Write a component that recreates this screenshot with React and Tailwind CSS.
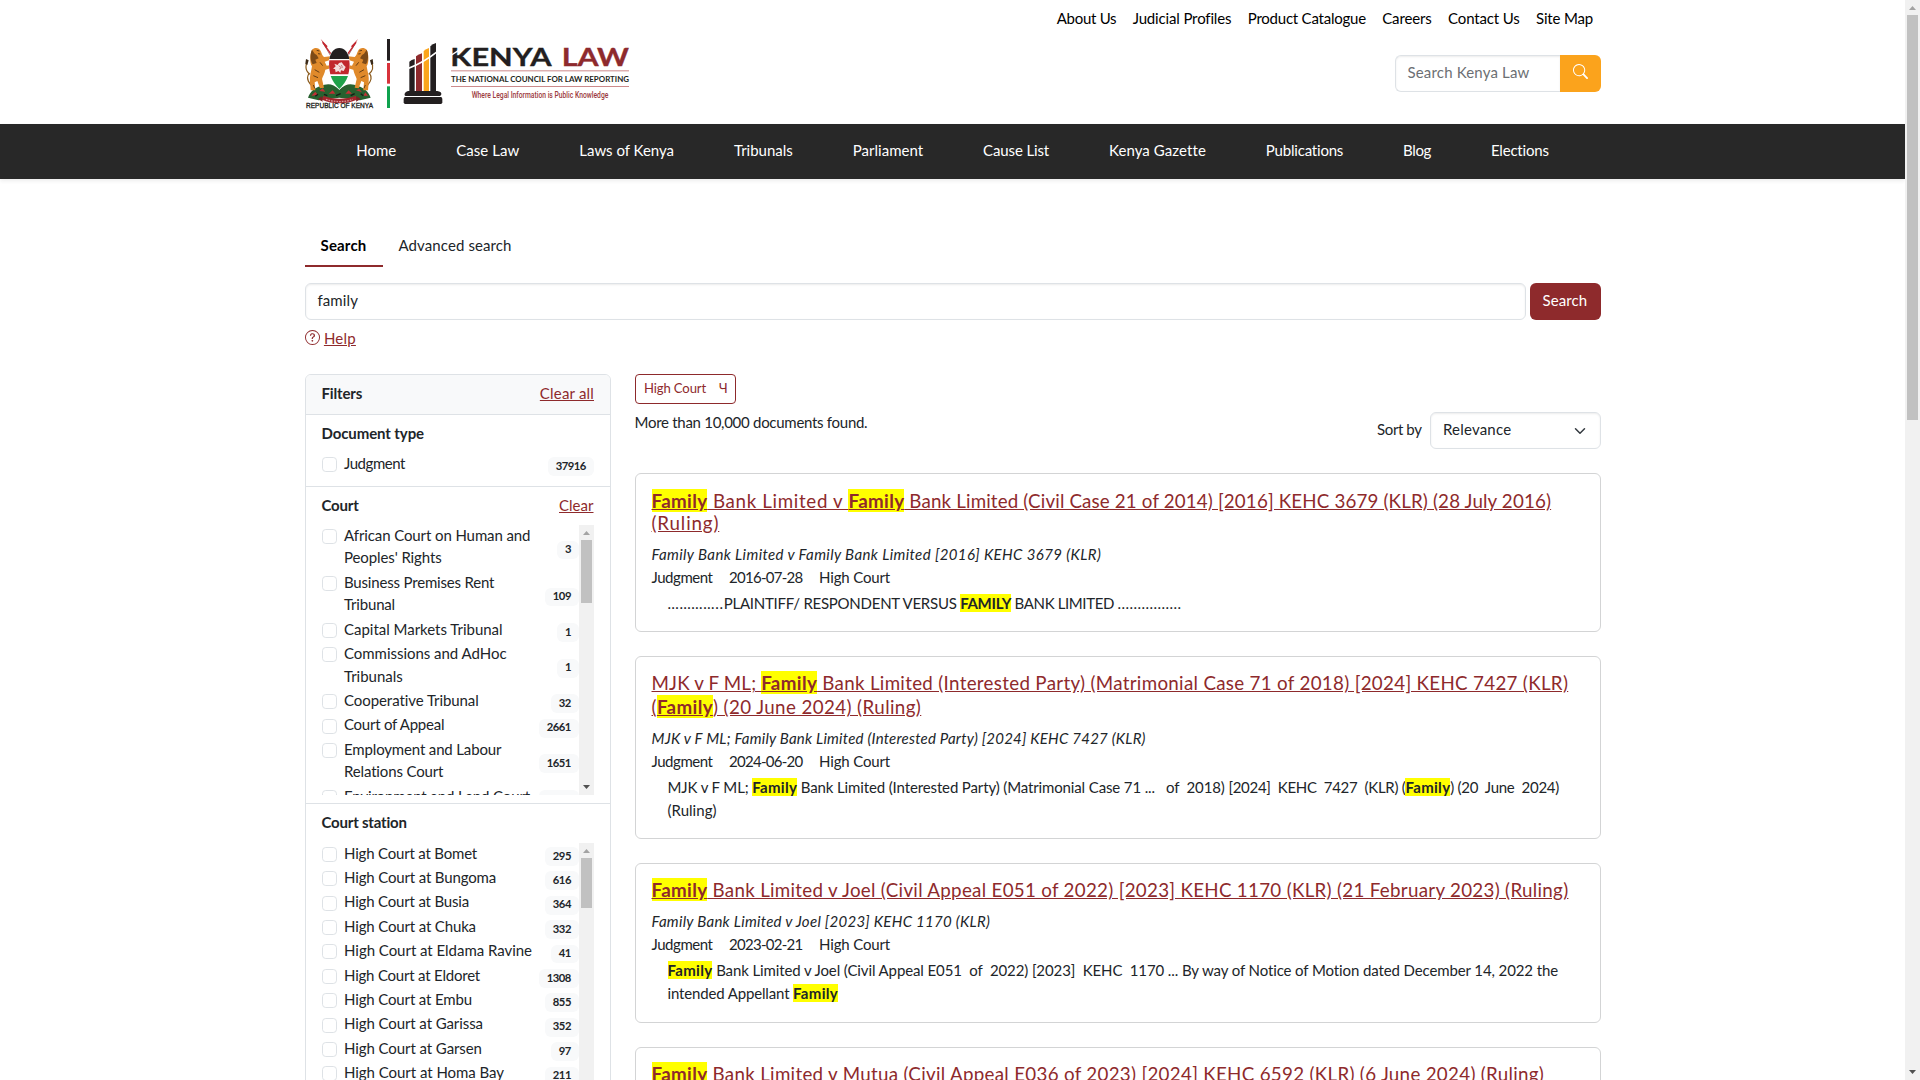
const TOP_LINKS = [
  ["About Us", "tracking-[-0.28px]"],
  ["Judicial Profiles", "tracking-[-0.15px]"],
  ["Product Catalogue", "tracking-[-0.23px]"],
  ["Careers", "tracking-[-0.13px]"],
  ["Contact Us", "tracking-[-0.15px]"],
  ["Site Map", "tracking-[-0.17px]"],
];

const NAV = [
  ["Home", "tracking-normal"],
  ["Case Law", "tracking-[0.08px]"],
  ["Laws of Kenya", "tracking-[-0.01px]"],
  ["Tribunals", "tracking-normal"],
  ["Parliament", "tracking-[0.03px]"],
  ["Cause List", "tracking-[-0.13px]"],
  ["Kenya Gazette", "tracking-[0.09px]"],
  ["Publications", "tracking-[-0.2px]"],
  ["Blog", "tracking-[-0.34px]"],
  ["Elections", "tracking-[-0.2px]"],
];

const COURTS = [
  ["African Court on Human and Peoples' Rights", "3", "tracking-[-0.1px]"],
  ["Business Premises Rent Tribunal", "109", "tracking-[-0.18px]"],
  ["Capital Markets Tribunal", "1", "tracking-[-0.02px]"],
  ["Commissions and AdHoc Tribunals", "1", "tracking-[-0.03px]"],
  ["Cooperative Tribunal", "32", "tracking-[-0.07px]"],
  ["Court of Appeal", "2661", "tracking-[-0.25px]"],
  ["Employment and Labour Relations Court", "1651", "tracking-[-0.15px]"],
  ["Environment and Land Court", "3512", "tracking-[-0.12px]"],
];

const STATIONS = [
  ["High Court at Bomet", "295", "tracking-[-0.19px]"],
  ["High Court at Bungoma", "616", "tracking-[-0.15px]"],
  ["High Court at Busia", "364", "tracking-[-0.18px]"],
  ["High Court at Chuka", "332", "tracking-[-0.15px]"],
  ["High Court at Eldama Ravine", "41", "tracking-[-0.03px]"],
  ["High Court at Eldoret", "1308", "tracking-[-0.21px]"],
  ["High Court at Embu", "855", "tracking-[-0.14px]"],
  ["High Court at Garissa", "352", "tracking-[-0.09px]"],
  ["High Court at Garsen", "97", "tracking-[-0.08px]"],
  ["High Court at Homa Bay", "211", "tracking-[-0.04px]"],
];

function Lion() {
  return (
    <g>
      <path d="M30 118 C16 108 16 92 22 78 M33 150 C24 140 18 128 27 116" fill="none" stroke="#8a5a1c" strokeWidth="3.5" />
      <path d="M18 72 l8 4 -4 14 -6 -4z" fill="#3a2a18" />
      <path d="M36 44 C44 36 58 38 62 48 C66 56 66 62 72 66 L92 64 L92 74 L74 80 L80 92 L93 90 L92 100 L76 104 C74 116 68 124 66 132 L72 158 L60 160 L52 138 L44 142 L46 166 L32 166 L30 142 C28 124 34 108 36 94 C28 82 30 56 36 44z" fill="#e08a2b" />
      <path d="M36 44 C30 56 30 76 38 88 L50 84 L46 74 L56 70 L50 60 L44 56z" fill="#7d4a17" />
      <path d="M50 46 l8 2 M54 56 l7 1 M44 104 l14 8 M40 122 l14 6 M60 82 l8 10 M40 150 l4 10" stroke="#4a2c10" strokeWidth="2.5" fill="none" />
    </g>
  );
}

function Logo() {
  return (
    <svg className="h-[70px] w-[325px] shrink-0" viewBox="15 12 975 210">
      <path d="M68 22 L94 66 M168 22 L142 66" stroke="#a87a7c" strokeWidth="3" />
      <path d="M62 12 L83 34 L78 38z M174 12 L153 34 L158 38z" fill="#c3272f" />
      <path d="M68 22 L92 56 M168 22 L144 56" stroke="#c3272f" strokeWidth="4" />
      <path d="M24 188 C32 168 44 158 62 154 C78 146 96 142 118 164 C140 142 158 146 174 154 C192 158 204 168 212 188 L180 196 L118 188 L56 196z" fill="#27612f" />
      <path d="M34 182 l12 -12 8 10 z M58 168 l10 -8 8 10z M86 176 l12 -10 8 10z M136 176 l10 -10 10 10z M168 166 l10 -4 8 10z M190 182 l6 -10 8 10z" fill="#c22f35" />
      <path d="M46 184 l8 -6 M72 178 l10 4 M108 182 l14 -6 M152 182 l12 -6 M182 176 l8 6" stroke="#171c17" strokeWidth="4" />
      <Lion />
      <g transform="matrix(-1 0 0 1 236 0)">
        <Lion />
      </g>
      <path d="M118 40 C134 40 146 54 149 76 C151 108 140 140 118 164 C96 140 85 108 87 76 C90 54 102 40 118 40z" fill="#fff" />
      <path d="M118 39 C134 39 144 52 148 72 L88 72 C92 52 102 39 118 39z" fill="#231f20" />
      <path d="M88 76 L148 76 C150 92 148 106 145 118 L91 118 C88 106 86 92 88 76z" fill="#c1272d" />
      <path d="M92 123 L144 123 C138 140 130 150 118 162 C106 150 98 140 92 123z" fill="#1fa24a" />
      <path d="M103 86 l10 4 4 -6 8 -2 6 8 6 6 -6 12 -8 -2 -2 8 -6 -6 -8 4 -2 -10 -6 0 8 -8z" fill="#f3dede" />
      <path d="M116 92 l8 6 -6 4 M124 90 l4 8" stroke="#a84a4e" strokeWidth="2" fill="none" />
      <path d="M70 182 C98 194 138 194 168 182 L170 194 C142 208 96 208 66 194z" fill="#a3262c" />
      <path d="M66 184 l-12 8 14 8z M170 184 l12 8 -14 8z" fill="#7e1e23" />
      <path d="M78 193 C102 202 136 202 158 193" fill="none" stroke="#d69a9c" strokeWidth="4" strokeDasharray="5 3" />
      <text x="18" y="218.5" textLength="201" lengthAdjust="spacingAndGlyphs" fontFamily="Liberation Sans" fontSize="19" fill="#231f20" stroke="#231f20" strokeWidth="0.9">REPUBLIC OF KENYA</text>

      <rect x="261" y="12" width="9" height="65" fill="#231f20" />
      <rect x="261" y="84" width="9" height="62" fill="#d8323b" />
      <rect x="261" y="154" width="9" height="65" fill="#0fa24e" />

      <path d="M328 80 Q334 74 344 72 V168 H328z" fill="#231f20" />
      <path d="M348 64 Q356 58 366 55 V168 H348z" fill="#8e2a2d" />
      <path d="M371 48 Q378 42 387 39 V168 H371z" fill="#fba51c" />
      <path d="M391 34 Q398 27 408 24 V168 H391z" fill="#231f20" />
      <path d="M326 100 Q372 82 412 50" fill="none" stroke="#fff" strokeWidth="5" />
      <path d="M324 168 h88 q12 2 12 8 q0 7 -8 7 h-96 q-8 0 -6 -7 q2 -6 10 -8z" fill="#231f20" />
      <path d="M316 186 h106 q5 0 5 6 v10 q0 5 -5 5 h-106 q-5 0 -5 -5 v-10 q0 -6 5 -6z" fill="#231f20" />

      <text x="451" y="92" textLength="304" lengthAdjust="spacingAndGlyphs" fontFamily="Lato" fontWeight="700" fontSize="75" fill="#231f20" stroke="#231f20" strokeWidth="1">KENYA</text>
      <path d="M450 63 L476 46" stroke="#fff" strokeWidth="4" />
      <text x="785" y="92" textLength="202" lengthAdjust="spacingAndGlyphs" fontFamily="Lato" fontWeight="700" fontSize="75" fill="#8e2a2d" stroke="#8e2a2d" strokeWidth="1">LAW</text>
      <rect x="453" y="106" width="534" height="3" fill="#cc8a8b" />
      <text x="453" y="140" textLength="534" lengthAdjust="spacingAndGlyphs" fontFamily="Lato" fontWeight="700" fontSize="24" fill="#231f20">THE NATIONAL COUNCIL FOR LAW REPORTING</text>
      <rect x="453" y="153" width="534" height="3" fill="#cc8a8b" />
      <text x="515" y="189" textLength="410" lengthAdjust="spacingAndGlyphs" fontFamily="Roboto" fontWeight="500" fontSize="25" fill="#9c3a3d">Where Legal Information is Public Knowledge</text>
    </svg>
  );
}

function Mark({ children, title }) {
  return (
    <mark
      className={
        title
          ? "bg-[#ff0] font-bold tracking-[0.35px] text-[#8e2a2c]"
          : "bg-[#ff0] font-bold tracking-[0.3px] text-[#212529]"
      }
    >
      {children}
    </mark>
  );
}

function FilterItem({ label, count, tracking }) {
  return (
    <div className="flex items-center justify-between">
      <label className="mb-[1.9px] flex max-w-[224px] items-start gap-[7.5px]">
        <span className="mt-[3.75px] size-[15px] shrink-0 rounded-[3.75px] border border-[#dee2e6] bg-white" />
        <span className={`-mt-[1.5px] mb-[1.5px] ${tracking}`}>{label}</span>
      </label>
      <span className="mt-[2.4px] rounded-[6px] bg-[#f8f9fa] pt-[2.6px] pr-[7.6px] pb-[5px] pl-[7.4px] text-[11.25px] leading-[11.25px] font-bold tracking-[-0.5px]">
        {count}
      </span>
    </div>
  );
}

function InnerScrollbar({ thumb }) {
  return (
    <div className="flex h-full w-[15px] shrink-0 flex-col items-center justify-between bg-[#f1f1f1]">
      <div className="flex flex-col items-center">
        <svg className="h-[15px] w-[15px]" viewBox="0 0 15 15">
          <path d="M4 10 L7.5 6 L11 10z" fill="#a3a3a3" />
        </svg>
        <div className={`w-[11px] bg-[#c1c1c1] ${thumb}`} />
      </div>
      <svg className="h-[15px] w-[15px]" viewBox="0 0 15 15">
        <path d="M4 5 L7.5 9 L11 5z" fill="#505050" />
      </svg>
    </div>
  );
}

function FilterList({ items, thumb }) {
  return (
    <div className="flex h-[270px] overflow-hidden">
      <div className="min-w-0 grow">
        {items.map(([label, count, tracking]) => (
          <FilterItem key={label} label={label} count={count} tracking={tracking} />
        ))}
      </div>
      <InnerScrollbar thumb={thumb} />
    </div>
  );
}

function Result({ title, cite, citeTracking, date, children }) {
  return (
    <article className="mb-6 rounded-[6px] border border-[#d3d4d5] px-4 pt-[15.6px] pb-[16.2px]">
      <h5 className="mb-[8.5px] text-[18.75px] leading-[22.5px] whitespace-nowrap text-[#8e2a2c]">{title}</h5>
      <div className={`italic ${citeTracking}`}>{cite}</div>
      <div className="flex gap-[16.5px]">
        <span className="tracking-[-0.45px]">Judgment</span>
        <span className="tracking-[-0.72px]">{date}</span>
        <span className="tracking-[-0.15px]">High Court</span>
      </div>
      <div className="mt-1 ml-4 whitespace-nowrap">{children}</div>
    </article>
  );
}

const nb = "\u00a0";

export default function App() {
  return (
    <div className="flex h-[1080px] w-[1920px] overflow-hidden bg-white font-['Lato','Open_Sans',sans-serif] text-[15px] leading-[22.5px] text-[#212529]">
      <div className="min-w-0 grow">
        <header className="mx-auto h-[124px] w-[1296px]">
          <div className="flex h-[37px] justify-end gap-[16.4px] pt-[6.6px] pr-[7.5px] text-black">
            {TOP_LINKS.map(([label, tracking]) => (
              <a key={label} className={tracking}>{label}</a>
            ))}
          </div>
          <div className="flex items-start justify-between pt-[2px]">
            <Logo />
            <div className="mt-4 flex h-[37px] w-[206px]">
              <div className="grow rounded-l-[6px] border border-r-0 border-[#dee2e6] pt-[4.5px] pl-3 tracking-[0.17px] text-[#6c6f73] shadow-[inset_0_1px_2px_rgba(0,0,0,0.075)]">
                Search Kenya Law
              </div>
              <div className="flex w-[41px] justify-center rounded-r-[6px] bg-[#fba31c] pt-[9px]">
                <svg className="size-[15px]" viewBox="0 0 16 16" fill="#fff">
                  <path d="M11.742 10.344a6.5 6.5 0 1 0-1.397 1.398h-.001q.044.06.098.115l3.85 3.85a1 1 0 0 0 1.415-1.414l-3.85-3.85a1 1 0 0 0-.115-.1zM12 6.5a5.5 5.5 0 1 1-11 0 5.5 5.5 0 0 1 11 0" />
                </svg>
              </div>
            </div>
          </div>
        </header>

        <nav className="flex h-[55px] justify-center gap-[59.9px] bg-[#282828] pt-[14.5px] text-white shadow-[0_2px_4px_rgba(0,0,0,0.075)]">
          {NAV.map(([label, tracking]) => (
            <a key={label} className={tracking}>{label}</a>
          ))}
        </nav>

        <main className="mx-auto w-[1296px] pt-[46px]">
          <div className="flex">
            <div className="h-[42px] w-[78px] border-b-2 border-[#8e2a2c] pt-[8.6px] pl-4 font-bold tracking-[0.18px] text-black">Search</div>
            <div className="px-4 pt-[8.6px] tracking-[0.1px]">Advanced search</div>
          </div>

          <div className="mt-4 flex h-[37px] gap-1">
            <div className="grow rounded-[6px] border border-[#dee2e6] pt-[4.5px] pl-3 tracking-[0.1px] shadow-[inset_0_1px_2px_rgba(0,0,0,0.075)]">family</div>
            <div className="w-[71px] rounded-[6px] bg-[#8e2a2c] pt-[5.5px] pl-[13px] tracking-[0.1px] text-white">Search</div>
          </div>

          <div className="mt-[6.5px] mb-[25px] flex gap-[4.4px] text-[#8e2a2c]">
            <svg className="mt-[3px] size-[15px]" viewBox="0 0 16 16" fill="currentColor">
              <path d="M8 15A7 7 0 1 1 8 1a7 7 0 0 1 0 14m0 1A8 8 0 1 0 8 0a8 8 0 0 0 0 16" />
              <path d="M5.255 5.786a.237.237 0 0 0 .241.247h.825c.138 0 .248-.113.266-.25.09-.656.54-1.134 1.342-1.134.686 0 1.314.343 1.314 1.168 0 .635-.374.927-.965 1.371-.673.489-1.206 1.06-1.168 1.987l.003.217a.25.25 0 0 0 .25.246h.811a.25.25 0 0 0 .25-.25v-.105c0-.718.273-.927 1.01-1.486.609-.463 1.244-.977 1.244-2.056 0-1.511-1.276-2.241-2.673-2.241-1.267 0-2.655.59-2.75 2.286m1.557 5.763c0 .533.425.927 1.01.927.609 0 1.028-.394 1.028-.927 0-.552-.42-.94-1.029-.94-.584 0-1.009.388-1.009.94" />
            </svg>
            <a className="tracking-[0.23px] underline">Help</a>
          </div>

          <div className="flex gap-6">
            <aside className="w-[306px] shrink-0 overflow-hidden rounded-t-[6px] border border-[#dee2e6]">
              <div className="flex justify-between border-b border-[#dee2e6] bg-[#f8f9fa] pt-[6.5px] pr-[15.5px] pb-[10px] pl-4">
                <b className="tracking-[-0.15px]">Filters</b>
                <a className="tracking-[0.19px] text-[#8e2a2c] underline">Clear all</a>
              </div>
              <section className="border-b border-[#dee2e6] px-4 pt-2 pb-[9px]">
                <div className="-mt-[1.5px] mb-[9px] font-bold tracking-[-0.1px]">Document type</div>
                <FilterItem label="Judgment" count="37916" tracking="tracking-[-0.45px]" />
              </section>
              <section className="border-b border-[#dee2e6] px-4 pt-2 pb-2">
                <div className="-mt-[1.5px] mb-[9px] flex justify-between">
                  <b className="tracking-[-0.2px]">Court</b>
                  <a className="tracking-[0.02px] text-[#8e2a2c] underline">Clear</a>
                </div>
                <FilterList items={COURTS} thumb="h-[63px]" />
              </section>
              <section className="px-4 pt-2">
                <div className="-mt-[1.5px] mb-[9.7px] font-bold tracking-[-0.2px]">Court station</div>
                <FilterList items={STATIONS} thumb="h-[50px]" />
              </section>
            </aside>

            <div className="w-[966px]">
              <div className="flex h-[30px] w-[101px] gap-[13px] rounded-[4px] border border-[#8e2a2c] pt-[2px] pl-[8.5px] text-[13.1px] text-[#8e2a2c]">
                <span className="tracking-[-0.13px]">High Court</span>
                <span>Ч</span>
              </div>
              <div className="mt-2 mb-6 flex h-[37px] justify-between">
                <div className="-mt-[1.5px] tracking-[-0.28px]">More than 10,000 documents found.</div>
                <div className="flex gap-2">
                  <span className="pt-[5.5px] tracking-[-0.4px]">Sort by</span>
                  <div className="flex w-[171px] justify-between rounded-[6px] border border-[#dee2e6] pt-[4.8px] pr-[14px] pl-[12.5px] shadow-[inset_0_1px_2px_rgba(0,0,0,0.075)]">
                    <span className="tracking-[0.2px]">Relevance</span>
                    <svg className="mt-[7px] h-3 w-3" viewBox="0 0 16 16" fill="none" stroke="#343a40" strokeWidth="2" strokeLinecap="round" strokeLinejoin="round">
                      <path d="m2 5 6 6 6-6" />
                    </svg>
                  </div>
                </div>
              </div>

              <Result
                title={
                  <>
                    <a className="tracking-[0.66px] underline"><Mark title>Family</Mark> Bank Limited v </a>
                    <a className="tracking-[0.15px] underline"><Mark title>Family</Mark> Bank Limited (Civil Case 21 of 2014) [2016] KEHC 3679 (KLR) (28 July 2016)<br /><span className="tracking-[0.85px]">(Ruling)</span></a>
                  </>
                }
                cite="Family Bank Limited v Family Bank Limited [2016] KEHC 3679 (KLR)"
                citeTracking="tracking-[0.39px]"
                date="2016-07-28"
              >
                <span className="tracking-[0.68px]">…………..</span>
                <span className="tracking-[-0.25px]">PLAINTIFF/ RESPONDENT VERSUS </span>
                <mark className="bg-[#ff0] font-bold tracking-[-0.29px] text-[#212529]">FAMILY</mark>
                <span className="tracking-[-0.38px]"> BANK LIMITED </span>
                <span className="tracking-[0.46px]">................</span>
              </Result>

              <Result
                title={
                  <>
                    <a className="tracking-[0.15px] underline">MJK v F ML; </a>
                    <a className="tracking-[0.31px] underline"><Mark title>Family</Mark> Bank Limited (Interested Party) (Matrimonial Case 71 of 2018) [2024] KEHC 7427 (KLR)</a>
                    <span className="mt-[1.5px] block">
                      <a className="tracking-[0.4px] underline">(<Mark title>Family</Mark>) (20 June 2024) (Ruling)</a>
                    </span>
                  </>
                }
                cite="MJK v F ML; Family Bank Limited (Interested Party) [2024] KEHC 7427 (KLR)"
                citeTracking="tracking-[0.22px]"
                date="2024-06-20"
              >
                <span className="tracking-[-0.13px]">MJK v F ML; <Mark>Family</Mark> Bank Limited (Interested Party) (Matrimonial Case 71 ... {nb} of {nb}2018) </span>
                <span className="tracking-[-0.29px]">[2024] {nb}KEHC {nb}7427 {nb}(KLR) (<Mark>Family</Mark>) (20 {nb}June {nb}2024)</span>
                <br />
                <span className="tracking-[0.03px]">(Ruling)</span>
              </Result>

              <Result
                title={<a className="tracking-[0.295px] underline"><Mark title>Family</Mark> Bank Limited v Joel (Civil Appeal E051 of 2022) [2023] KEHC 1170 (KLR) (21 February 2023) (Ruling)</a>}
                cite="Family Bank Limited v Joel [2023] KEHC 1170 (KLR)"
                citeTracking="tracking-[0.28px]"
                date="2023-02-21"
              >
                <div className="pb-[1.4px] tracking-[-0.11px]"><Mark>Family</Mark> Bank Limited v Joel (Civil Appeal E051 {nb}of {nb}2022) [2023] {nb}KEHC {nb}1170 ... By way of Notice of Motion dated December 14, 2022 the<br /><span className="tracking-[-0.15px]">intended Appellant <Mark>Family</Mark></span></div>
              </Result>

              <Result
                title={<a className="tracking-[0.3px] underline"><Mark title>Family</Mark> Bank Limited v Mutua (Civil Appeal E036 of 2023) [2024] KEHC 6592 (KLR) (6 June 2024) (Ruling)</a>}
                cite="Family Bank Limited v Mutua [2024] KEHC 6592 (KLR)"
                citeTracking="tracking-[0.25px]"
                date="2024-06-06"
              />
            </div>
          </div>
        </main>
      </div>

      <div className="flex h-[1080px] w-[15px] shrink-0 flex-col items-center justify-between bg-[#f1f1f1]">
        <div className="flex flex-col items-center">
          <svg className="h-[15px] w-[15px]" viewBox="0 0 15 15">
            <path d="M4 10 L7.5 6 L11 10z" fill="#a3a3a3" />
          </svg>
          <div className="h-[405px] w-[11px] bg-[#c1c1c1]" />
        </div>
        <svg className="h-[15px] w-[15px]" viewBox="0 0 15 15">
          <path d="M4 5 L7.5 9 L11 5z" fill="#505050" />
        </svg>
      </div>
    </div>
  );
}
